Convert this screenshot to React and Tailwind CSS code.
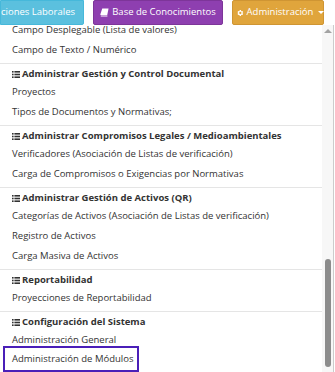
const GROUPS = [
  {
    items: ['Campo Desplegable (Lista de valores)', 'Campo de Texto / Numérico'],
  },
  {
    title: 'Administrar Gestión y Control Documental',
    items: ['Proyectos', 'Tipos de Documentos y Normativas;'],
  },
  {
    title: 'Administrar Compromisos Legales / Medioambientales',
    items: [
      'Verificadores (Asociación de Listas de verificación)',
      'Carga de Compromisos o Exigencias por Normativas',
    ],
  },
  {
    title: 'Administrar Gestión de Activos (QR)',
    items: [
      'Categorías de Activos (Asociación de Listas de verificación)',
      'Registro de Activos',
      'Carga Masiva de Activos',
    ],
  },
  {
    title: 'Reportabilidad',
    items: ['Proyecciones de Reportabilidad'],
  },
  {
    title: 'Configuración del Sistema',
    items: ['Administración General', 'Administración de Módulos'],
  },
];

function ListIcon() {
  return (
    <svg width="8" height="7" viewBox="0 0 8 7" className="shrink-0" fill="#333">
      <rect x="0" y="0" width="1.6" height="1.6" />
      <rect x="2.4" y="0" width="5.6" height="1.6" />
      <rect x="0" y="2.7" width="1.6" height="1.6" />
      <rect x="2.4" y="2.7" width="5.6" height="1.6" />
      <rect x="0" y="5.4" width="1.6" height="1.6" />
      <rect x="2.4" y="5.4" width="5.6" height="1.6" />
    </svg>
  );
}

function BookIcon() {
  return (
    <svg width="9" height="9" viewBox="0 0 10 10" fill="white" className="shrink-0">
      <path d="M2.5 0.5 H9.5 L8 8 H1 Q0.2 8 0.4 7 Z M1.4 8.6 H8.4 L8.2 9.5 H1.2 Q0.6 9.5 0.7 9 Z" />
    </svg>
  );
}

function CogIcon() {
  return (
    <svg width="8" height="8" viewBox="0 0 24 24" fill="white" className="shrink-0">
      <path d="M19.4 13a7.5 7.5 0 0 0 0-2l2.1-1.6-2-3.5-2.5 1a7 7 0 0 0-1.7-1L15 3.2h-4l-.4 2.7a7 7 0 0 0-1.7 1l-2.5-1-2 3.5L6.5 11a7.5 7.5 0 0 0 0 2l-2.1 1.6 2 3.5 2.5-1a7 7 0 0 0 1.7 1l.4 2.7h4l.4-2.7a7 7 0 0 0 1.7-1l2.5 1 2-3.5zM13 15.5a3.5 3.5 0 1 1 0-7 3.5 3.5 0 0 1 0 7z" />
    </svg>
  );
}

export default function App() {
  return (
    <div
      className="w-[335px] h-[372px] overflow-hidden bg-white text-[#333]"
      style={{ fontFamily: '"Open Sans", "Liberation Sans", sans-serif' }}
    >
      {/* Top button bar */}
      <div className="flex h-[25px] gap-[9px] text-[9.5px] text-white whitespace-nowrap">
        <div className="w-[84px] shrink-0 flex items-center justify-end pr-[8px] overflow-hidden bg-[#5bc0de] border border-[#46b8da] rounded-br-[2px]">
          Relaciones Laborales
        </div>
        <div className="w-[130px] shrink-0 flex items-center justify-center gap-[3px] bg-[#8e3fb0] border border-[#7d3599] rounded-[2px]">
          <BookIcon />
          Base de Conocimientos
        </div>
        <div className="w-[92px] shrink-0 flex items-center justify-center gap-[3px] pl-[4px] bg-[#e0a53c] border border-[#cf9533] rounded-[2px]">
          <CogIcon />
          Administración
          <span className="ml-[2px] border-x-[3px] border-t-[3px] border-x-transparent border-t-white" />
        </div>
      </div>

      {/* Dropdown panel */}
      <div className="flex h-[347px] w-[334px] border-r border-[#ccc] overflow-hidden">
        <div className="flex-1 overflow-hidden">
          <div className="-mt-[5px] text-[9.5px]">
            {GROUPS.map((g, gi) => (
              <div key={gi}>
                {gi > 0 && <div className="my-[3px] h-px bg-[#e5e5e5]" />}
                {g.title && (
                  <div className="h-[15px] flex items-center gap-[2px] pl-[12px] font-bold text-[#333]">
                    <ListIcon />
                    {g.title}
                  </div>
                )}
                {g.items.map((it) =>
                  it === 'Administración de Módulos' ? (
                    <div key={it} className="h-[20px] flex items-center">
                      <div className="ml-[3px] h-[26px] -mt-[2px] inline-flex items-center pl-[7px] pr-[4px] border-2 border-[#4a1fb8] whitespace-nowrap">
                        {it}
                      </div>
                    </div>
                  ) : (
                    <div key={it} className="h-[20px] flex items-center pl-[12px] whitespace-nowrap">
                      {it}
                    </div>
                  )
                )}
              </div>
            ))}
          </div>
        </div>

        {/* Scrollbar */}
        <div className="w-[11px] shrink-0 bg-[#f7f7f7] flex flex-col items-center">
          <span className="mt-[4px] border-x-[4px] border-b-[4px] border-x-transparent border-b-[#a3a3a3]" />
          <div className="mt-[226px] w-[6px] h-[108px] rounded-full bg-[#8c8c8c]" />
        </div>
      </div>
    </div>
  );
}
